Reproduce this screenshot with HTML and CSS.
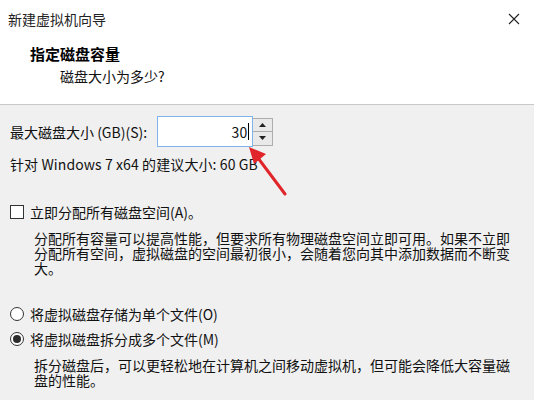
FILE: index.html
```html
<html lang="zh-CN">
  <head>
    <meta charset="UTF-8" />
    <meta name="viewport" content="width=device-width, initial-scale=1.0" />
    <title>新建虚拟机向导</title>
    <link rel="stylesheet" href="styles.css">
  </head>
  <body>
    <div class="wizard">
      <div class="header">
        <div class="titlebar">
          <span class="title">新建虚拟机向导</span>
          <svg class="close" width="12" height="12" viewBox="0 0 12 12">
            <path d="M1 1 L11 11 M11 1 L1 11" stroke="#222" stroke-width="1.1" fill="none" />
          </svg>
        </div>
        <h1 class="step-title">指定磁盘容量</h1>
        <p class="step-sub">磁盘大小为多少?</p>
      </div>

      <div class="content">
        <div class="size-row">
          <label for="size">最大磁盘大小 (GB)(S):</label>
          <div class="spin">
            <div class="spin-input"><span>30</span><i class="caret"></i></div>
            <div class="spin-buttons">
              <div class="spin-btn"><svg width="7" height="4" viewBox="0 0 7 4"><path d="M0 4 L3.5 0 L7 4 Z" fill="#222" /></svg></div>
              <div class="spin-btn"><svg width="7" height="4" viewBox="0 0 7 4"><path d="M0 0 L3.5 4 L7 0 Z" fill="#222" /></svg></div>
            </div>
          </div>
        </div>
        <div class="hint">针对 Windows 7 x64 的建议大小: 60 GB</div>

        <div class="option check-option">
          <span class="checkbox"></span>
          <span>立即分配所有磁盘空间(A)。</span>
        </div>
        <p class="desc">分配所有容量可以提高性能，但要求所有物理磁盘空间立即可用。如果不立即分配所有空间，虚拟磁盘的空间最初很小，会随着您向其中添加数据而不断变大。</p>

        <div class="option radio-first">
          <span class="radio"></span>
          <span>将虚拟磁盘存储为单个文件(O)</span>
        </div>
        <div class="option radio-second">
          <span class="radio checked"></span>
          <span>将虚拟磁盘拆分成多个文件(M)</span>
        </div>
        <p class="desc">拆分磁盘后，可以更轻松地在计算机之间移动虚拟机，但可能会降低大容量磁盘的性能。</p>
      </div>

      <!-- red pointer arrow drawn over the dialog -->
      <svg class="pointer" width="46" height="54" viewBox="0 0 46 54">
        <path d="M40 49 L10 9" stroke="#e0262a" stroke-width="3" stroke-linecap="round" fill="none" />
        <path d="M4 2 L21 9 L9 19 Z" fill="#e0262a" />
      </svg>
    </div>
  </body>
</html>
```

FILE: styles.css
```css
body {
  margin: 0;
  background: #f0f0f0;
  font-family: "Noto Sans CJK SC", "Noto Sans", sans-serif;
  font-size: 14px;
  color: #111;
}

.wizard {
  position: relative;
  width: 534px;
  height: 400px;
  overflow: hidden;
}

.header {
  background: #fff;
  border-bottom: 1px solid #c9c9c9;
  padding-bottom: 18px;
}

.titlebar {
  display: flex;
  justify-content: space-between;
  align-items: center;
  height: 38px;
  padding: 0 14px 0 8px;
}

.title {
  font-size: 14px;
  line-height: 20px;
  color: #222;
}

.step-title {
  margin: 6px 0 0 30px;
  font-size: 15px;
  line-height: 20px;
  font-weight: bold;
  color: #000;
}

.step-sub {
  margin: 2px 0 0 60px;
  font-size: 14px;
  line-height: 20px;
}

.content {
  padding: 11px 20px 0 10px;
}

.size-row {
  display: flex;
  align-items: center;
  gap: 10px;
}

.size-row label {
  line-height: 20px;
}

.spin {
  display: flex;
  align-items: center;
}

.spin-input {
  width: 91px;
  height: 29px;
  border: 1px solid #7eb4ea;
  background: #fff;
  display: flex;
  align-items: center;
  justify-content: flex-end;
  padding-right: 3px;
  box-sizing: content-box;
}

.spin-input span {
  line-height: 20px;
}

.caret {
  width: 1px;
  height: 17px;
  background: #000;
  margin-left: 1px;
}

.spin-buttons {
  display: flex;
  flex-direction: column;
  width: 19px;
  height: 26px;
  border: 1px solid #adadad;
  border-left: none;
}

.spin-btn {
  flex: 1;
  display: flex;
  align-items: center;
  justify-content: center;
  background: #e9e9e9;
}

.spin-btn + .spin-btn {
  border-top: 1px solid #adadad;
}

.hint {
  margin-top: 7px;
  line-height: 20px;
  letter-spacing: 0.1px;
}

.option {
  display: flex;
  align-items: center;
  gap: 6px;
  line-height: 20px;
}

.check-option {
  margin-top: 28px;
}

.checkbox {
  width: 12px;
  height: 12px;
  border: 1px solid #333;
  background: #fff;
}

.radio {
  width: 12px;
  height: 12px;
  border: 1px solid #333;
  border-radius: 50%;
  background: #fff;
  position: relative;
}

.radio.checked::after {
  content: "";
  position: absolute;
  left: 2px;
  top: 2px;
  width: 8px;
  height: 8px;
  border-radius: 50%;
  background: #2b2b2b;
}

.radio-first {
  margin-top: 28px;
}

.radio-second {
  margin-top: 5px;
}

.desc {
  margin: 9px 0 0 24px;
  line-height: 15px;
  width: 482px;
}

.pointer {
  position: absolute;
  left: 245px;
  top: 145px;
}
```
